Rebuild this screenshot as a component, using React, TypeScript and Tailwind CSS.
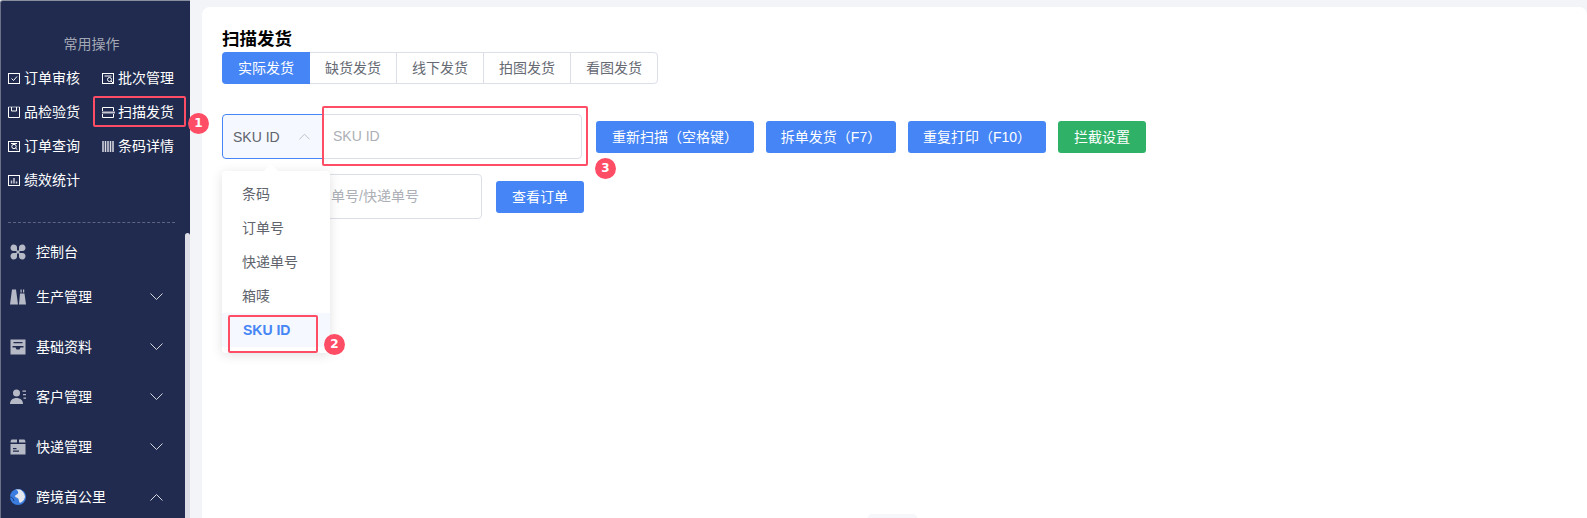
import React from "react";

const font = { fontFamily: '"Liberation Sans","Noto Sans CJK SC",sans-serif' };

const S = ({ children }: { children: React.ReactNode }) => (
  <svg width="13" height="13" viewBox="0 0 13 13" fill="none" stroke="#fff" strokeWidth="1" className="shrink-0">
    {children}
  </svg>
);

const quick: [string, React.ReactNode][] = [
  ["订单审核", <S><rect x=".5" y="1.5" width="11" height="10" /><path d="M3.500 6.500l2 2 3.500-4" /></S>],
  ["批次管理", <S><rect x=".5" y="1.5" width="11" height="10" /><path d="M2.500 4h7" /><circle cx="7.500" cy="7.500" r="2" /><path d="M9 9l2 2" /></S>],
  ["品检验货", <S><path d="M.5 1v10.500h11V1" /><path d="M3.500 1v4h5V1" /><path d="M.5 1h11" strokeOpacity=".6" /></S>],
  ["扫描发货", <S><path d="M.5 5V1.500h11V5M.5 8v3.500h11V8" /><path d="M0 6.500h13" stroke="#c6c9d4" strokeWidth="2" /></S>],
  ["订单查询", <S><rect x=".5" y="1.500" width="11" height="10" /><circle cx="6" cy="6.500" r="2.200" /><path d="M7.600 8l1.700 1.700M3 3.500h6" /></S>],
  ["条码详情", <S><path d="M1 1v11M3.500 1v11M6 1v11M8.500 1v11M11 1v11" strokeWidth="1.500" stroke="#d8dae2" /></S>],
  ["绩效统计", <S><rect x=".5" y="1.500" width="11" height="10" /><path d="M3.500 9.500V6.500M6 9.500V4M8.500 9.500V7.500" strokeWidth="1.500" stroke="#c6c9d4" /></S>],
];

const C = "#b6bac6";
const menu: [string, React.ReactNode, string?][] = [
  ["控制台", <svg width="16" height="16" viewBox="0 0 16 16" fill={C}><path d="M7 7H3.500C1.500 7 .5 5.500 .5 4S1.500 .5 3.500 .5 7 1.500 7 3.500zM9 7h3.500c2 0 3-1.500 3-3S14.500 .5 12.500 .5 9 1.500 9 3.500zM7 9H3.500c-2 0-3 1.500-3 3s1 3.500 3 3.500S7 14.500 7 12.500zM9 9h3.500c2 0 3 1.500 3 3s-1 3.500-3 3.500S9 14.500 9 12.500z" /><rect x="6.500" y="6.500" width="3" height="3" /></svg>, "none"],
  ["生产管理", <svg width="16" height="16" viewBox="0 0 16 16" fill={C}><path d="M2 .5h4l2 15H0zM10 4.500h4.500L16 15.500H9z" /><path d="M10.500 .5h1.200v3h-1.200zM13 .5h1.200v3H13z" /></svg>, "down"],
  ["基础资料", <svg width="16" height="16" viewBox="0 0 16 16" fill={C}><path fillRule="evenodd" d="M.5 .5h15v15H.5zM3.500 3v1.200h9V3zM2.500 7v1.500h3l1 2h3l1-2h3V7z" /></svg>, "down"],
  ["客户管理", <svg width="16" height="16" viewBox="0 0 16 16" fill={C}><circle cx="6.500" cy="4" r="3.500" /><path d="M0 15c0-4 3-6 6.500-6s6.500 2 6.500 6z" /><path d="M12.500 1.500H16v1.200h-3.500zM13 5h3v1.200h-3zM13.500 8.500H16v1.200h-2.500z" /></svg>, "down"],
  ["快递管理", <svg width="16" height="16" viewBox="0 0 16 16" fill={C}><path d="M2 .5h5v3H.5C.5 2 1 .5 2 .5zM9 .5h5c1 0 1.500 1.500 1.500 3H9z" /><path fillRule="evenodd" d="M.5 5h15v10.500H.5zM3 9v1.200h3.500V9zM3 11.500v1.200h6v-1.200z" /></svg>, "down"],
  ["跨境首公里", <svg width="16" height="16" viewBox="0 0 16 16"><circle cx="8" cy="8" r="8" fill="#3b7ce0" /><path d="M5.500 .5C8 1.500 8.500 3 8 4.500 7 6 5.500 5.500 5 7c0 1.500 2.500 1.500 3.500 3 .5 1.500.5 3 1.500 4 3-1.500 5-4 5-6.500-.5-3-2-5.500-5-7z" fill="#e4e7ee" /><path d="M0 8c2 0 3.500 1.500 4 4" stroke="#1d3f80" fill="none" /></svg>, "up"],
];

const Chevron = ({ up, color = "#d6d8e0", w = 13 }: { up?: boolean; color?: string; w?: number }) => (
  <svg width={w} height={(w * 8) / 13} viewBox="0 0 13 8" fill="none" stroke={color} strokeWidth="1">
    <path d={up ? "M.5 7.500l6-6 6 6" : "M.5 .5l6 6 6-6"} />
  </svg>
);

const Btn = ({ children, className = "bg-[#4585f5]" }: { children: React.ReactNode; className?: string }) => (
  <div className={`h-8 rounded-[3px] text-white text-sm leading-8 text-center ${className}`}>{children}</div>
);

const Badge = ({ n, className }: { n: number; className: string }) => (
  <div className={`absolute w-[21px] h-[21px] rounded-full bg-[#ff4d66] text-white text-xs font-bold font-['DejaVu_Sans'] leading-[21px] text-center ${className}`}>{n}</div>
);

export default function App() {
  return (
    <div style={font} className="relative flex w-[1587px] h-[518px] overflow-hidden bg-[#f3f4f8]">
      <aside className="relative w-[190px] shrink-0 h-full bg-[#202b4f] border-l border-t border-l-[#6b7186] border-t-[#8a8fa0] rounded-tl-[3px] text-sm">
        <div className="text-center text-[#a4a8b6] pt-[33px] pr-[8px] leading-5">常用操作</div>
        <div className="grid grid-cols-[94px_1fr] pl-[7px] mt-[7px] auto-rows-[34px] text-white">
          {quick.map(([t, ic]) => (
            <div key={t} className="flex items-center gap-[3px] leading-5">
              {ic}
              <span>{t}</span>
            </div>
          ))}
        </div>
        <div className="ml-[7px] w-[167px] mt-[25px] border-t border-dashed border-[#5d6580]" />
        <div className="mt-[18px] pl-[9px] text-white">
          {menu.map(([t, ic, ch], i) => (
            <div key={t} className={`flex items-center w-[153px] ${i === 0 ? "h-[21px] mb-[24px]" : "h-[21px] mb-[29px]"}`}>
              <span className="w-[16px] h-[16px] flex">{ic}</span>
              <span className="ml-[10px] flex-1 leading-5">{t}</span>
              {ch !== "none" && <Chevron up={ch === "up"} />}
            </div>
          ))}
        </div>
        <div className="absolute right-0 top-[232px] bottom-0 w-[5px] bg-[#dcdde6] rounded-t-[3px]" />
      </aside>

      <main className="flex-1 pl-[12px] pt-[7px] h-full">
        <div className="relative h-full bg-white rounded-t-lg pl-[20px] pt-[20px]">
          <h1 className="text-[17.500px] leading-6 font-bold text-black">扫描发货</h1>
          <div className="flex mt-[1px] text-sm h-8 w-[436px] leading-[30px] text-[#666a73] border border-[#dcdfe8] rounded-[4px] text-center">
            <div className="w-[88px] -m-px h-8 leading-8 bg-[#4585f5] text-white rounded-l-[4px]">实际发货</div>
            <div className="w-[87px] border-r border-[#dcdfe8] ml-px">缺货发货</div>
            <div className="w-[87px] border-r border-[#dcdfe8]">线下发货</div>
            <div className="w-[87px] border-r border-[#dcdfe8]">拍图发货</div>
            <div className="flex-1">看图发货</div>
          </div>

          <div className="flex items-center mt-[30px] h-[45px]">
            <div className="flex items-center w-[101px] h-[45px] bg-[#f5f8fe] border border-[#4585f5] rounded-l-[4px] pl-[10px] text-sm text-[#60646c]">
              <span className="w-[66px]">SKU ID</span>
              <Chevron up color="#b5b8c0" w={11} />
            </div>
            <div className="w-[259px] h-[45px] border border-[#dcdfe8] rounded-r-[4px] pl-[9px] text-sm leading-[43px] text-[#acafb6]">SKU ID</div>
            <div className="flex gap-3 ml-[14px]">
              <Btn className="bg-[#4585f5] w-[158px]">重新扫描（空格键）</Btn>
              <Btn className="bg-[#4585f5] w-[130px]">拆单发货（F7）</Btn>
              <Btn className="bg-[#4585f5] w-[138px]">重复打印（F10）</Btn>
              <Btn className="bg-[#2fb268] w-[88px]">拦截设置</Btn>
            </div>
          </div>

          <div className="flex items-center mt-[15px] h-[45px]">
            <div className="w-[260px] h-[45px] border border-[#dcdfe8] rounded-[4px] text-sm leading-[43px] text-[#acafb6] text-right pr-[62px]">单号/快递单号</div>
            <Btn className="bg-[#4585f5] w-[88px] ml-[14px]">查看订单</Btn>
          </div>

          <div className="absolute left-[20px] top-[164px] w-[108px] h-[182px] bg-white rounded-[4px] shadow-[0_2px_12px_rgba(0,0,0,0.12)] text-sm text-[#60646c]">
            <div className="absolute -top-[5px] left-[44px] w-[10px] h-[10px] rotate-45 bg-white" />
            <div className="relative pt-[6px]">
              {["条码", "订单号", "快递单号", "箱唛"].map((t) => (
                <div key={t} className="h-[34px] leading-[34px] pl-[20px]">{t}</div>
              ))}
              <div className="h-[34px] leading-[34px] pl-[21px] bg-[#f5f8fe] text-[#4585f5] font-bold">SKU ID</div>
            </div>
          </div>
          <div className="absolute left-[666px] bottom-0 w-[49px] h-[4px] bg-[#f6f7fa] rounded-t-[4px]" />
        </div>
      </main>

      <div className="absolute left-[93px] top-[96px] w-[93px] h-[31px] border-2 border-[#ff4d66] rounded-[2px]" />
      <Badge n={1} className="left-[188px] top-[113px]" />
      <div className="absolute left-[322px] top-[106px] w-[266px] h-[60px] border-2 border-[#ff4d66] rounded-[2px]" />
      <Badge n={3} className="left-[595px] top-[158px]" />
      <div className="absolute left-[228px] top-[315px] w-[90px] h-[38px] border-2 border-[#ff4d66] rounded-[2px]" />
      <Badge n={2} className="left-[324px] top-[334px]" />
    </div>
  );
}
